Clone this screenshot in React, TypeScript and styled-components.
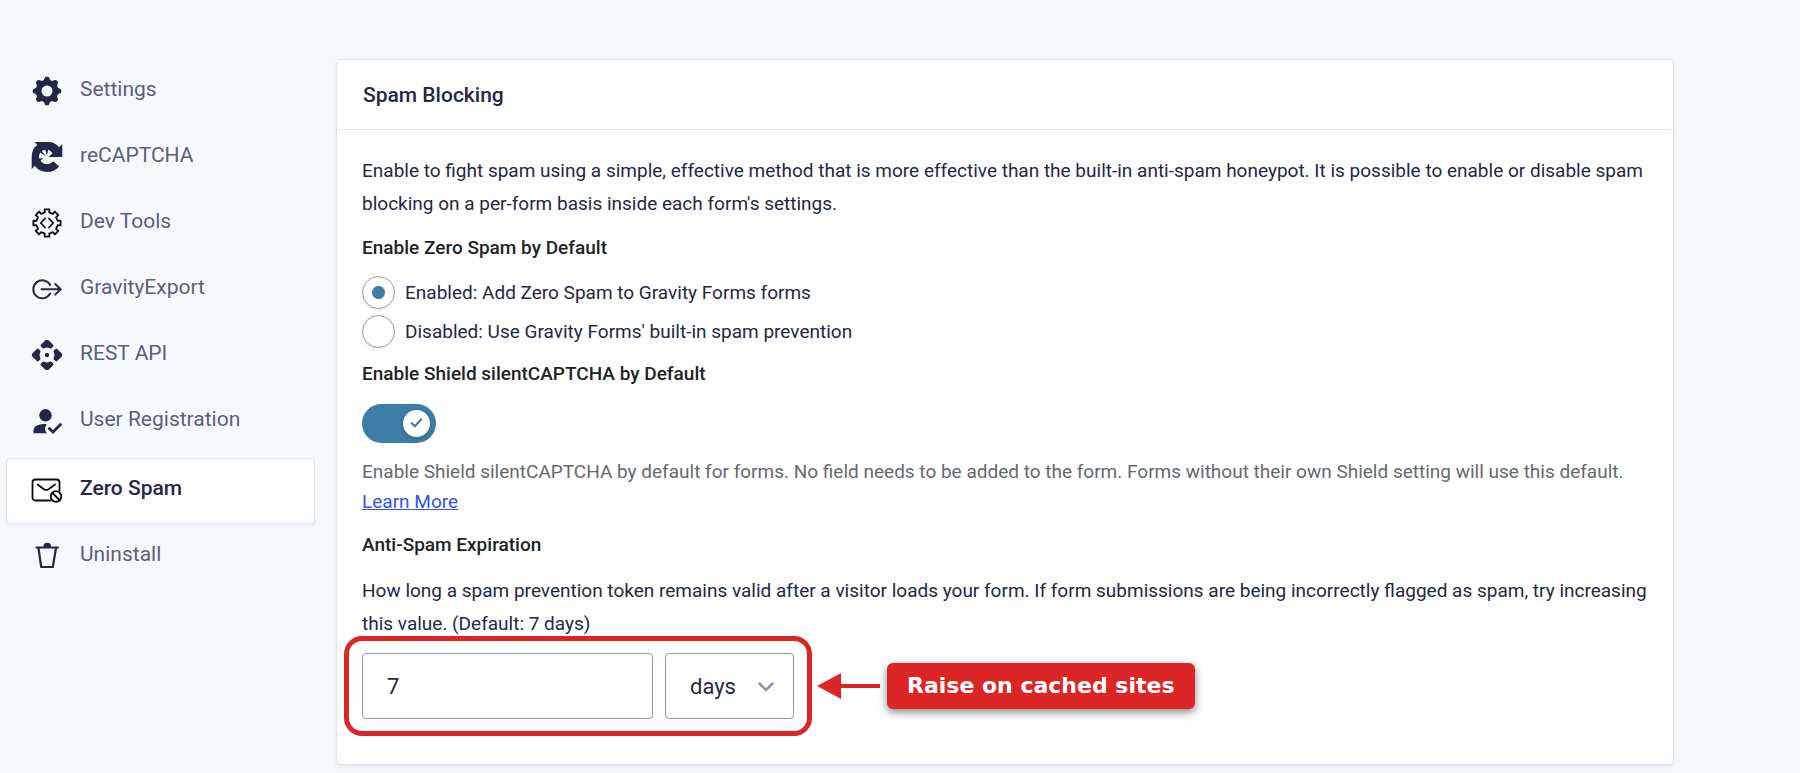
import React, { useState } from "react";
import styled, { createGlobalStyle, css } from "styled-components";

const color = {
  page: "#f5f9fc",
  navy: "#242748",
  slate: "#5b5e80",
  ink: "#1d2327",
  muted: "#646970",
  line: "#dfe2ec",
  field: "#9092b2",
  accent: "#3e7da6",
  link: "#3553e6",
  alert: "#dc2626",
};

const GlobalStyle = createGlobalStyle`
  *, *::before, *::after { box-sizing: border-box; }
  body {
    margin: 0;
    background: ${color.page};
    color: ${color.navy};
    font-family: Roboto, "Liberation Sans", sans-serif;
  }
  h2, h3, p, ul, fieldset { margin: 0; padding: 0; border: 0; }
`;

const Page = styled.div`
  display: flex;
  align-items: flex-start;
  gap: 21px;
  padding: 59px 126px 8px 6px;
`;

const Nav = styled.nav`
  flex: 0 0 309px;
`;

const NavList = styled.ul`
  list-style: none;
`;

const NavLink = styled.a<{ $active?: boolean }>`
  display: flex;
  align-items: center;
  gap: 17px;
  height: 66px;
  padding: 0 24px 2px;
  border: 1px solid transparent;
  border-radius: 4px;
  color: ${color.slate};
  font-size: 21px;
  line-height: 24px;
  text-decoration: none;
  ${(p) =>
    p.$active &&
    css`
      margin-top: 3px;
      background: #fff;
      border-color: ${color.line};
      box-shadow: 0 2px 3px rgba(58, 58, 87, 0.06);
      color: ${color.navy};
      font-weight: 500;
    `}
`;

const NavText = styled.span`
  padding-bottom: 4px;
`;

const NavIcon = styled.svg`
  flex: none;
  width: 32px;
  height: 32px;
  overflow: visible;
`;

const Card = styled.main`
  flex: 1;
  min-width: 0;
  background: #fff;
  border: 1px solid ${color.line};
  border-radius: 4px;
  box-shadow: 0 2px 4px rgba(58, 58, 87, 0.08);
`;

const CardHeader = styled.header`
  padding: 23px 26px 22px;
  border-bottom: 1px solid #e6e7ee;
`;

const CardTitle = styled.h2`
  font-size: 21px;
  line-height: 24px;
  font-weight: 500;
`;

const CardBody = styled.form`
  display: flex;
  flex-direction: column;
  align-items: flex-start;
  padding: 24px 22px 45px 25px;
`;

const Intro = styled.p`
  font-size: 19px;
  line-height: 33px;
`;

const Field = styled.fieldset`
  min-width: 0;
  margin-top: 16px;
`;

const ShieldField = styled(Field)`
  margin-top: 14px;
`;

const FieldTitle = styled.h3`
  color: ${color.ink};
  font-size: 19px;
  line-height: 24px;
  font-weight: 500;
`;

const Choices = styled.div`
  display: grid;
  gap: 6px;
  margin-top: 16px;
`;

const Choice = styled.label`
  display: flex;
  align-items: center;
  gap: 10px;
  font-size: 19px;
  line-height: 33px;
`;

const Radio = styled.input`
  appearance: none;
  flex: none;
  width: 33px;
  height: 33px;
  margin: 0;
  border: 1px solid ${color.field};
  border-radius: 50%;
  box-shadow: 0 2px 2px rgba(58, 58, 87, 0.06);
  &:checked {
    background: radial-gradient(circle, ${color.accent} 6px, #fff 7px);
  }
`;

const Toggle = styled.label`
  display: block;
  position: relative;
  width: 74px;
  height: 39px;
  margin-top: 18px;
`;

const ToggleInput = styled.input`
  appearance: none;
  display: block;
  width: 100%;
  height: 100%;
  margin: 0;
  border-radius: 20px;
  background: ${color.field};
  &:checked {
    background: ${color.accent};
  }
`;

const Knob = styled.svg<{ $on: boolean }>`
  position: absolute;
  top: 6px;
  left: ${(p) => (p.$on ? "41px" : "6px")};
  width: 27px;
  height: 27px;
  border-radius: 50%;
  background: #fff;
  box-shadow: 0 2px 4px rgba(20, 40, 70, 0.25);
  pointer-events: none;
`;

const Help = styled.p`
  margin-top: 14px;
  color: ${color.muted};
  font-size: 19px;
  line-height: 30px;
`;

const HelpLink = styled.a`
  color: ${color.link};
`;

const Explain = styled(Intro)`
  margin-top: 17px;
`;

const Duration = styled.div`
  display: inline-flex;
  position: relative;
  gap: 12px;
  margin-top: 13px;
`;

const control = css`
  height: 66px;
  border: 1px solid ${color.field};
  border-radius: 4px;
  background: #fff;
  color: ${color.navy};
  font-family: inherit;
  font-size: 22px;
`;

const Amount = styled.input`
  ${control}
  width: 291px;
  padding: 0 24px;
`;

const UnitBox = styled.div`
  position: relative;
`;

const Unit = styled.select`
  ${control}
  appearance: none;
  width: 129px;
  padding: 0 48px 0 24px;
`;

const Chevron = styled.svg`
  position: absolute;
  top: 28px;
  right: 20px;
  width: 16px;
  height: 12px;
  pointer-events: none;
`;

const Callout = styled.div`
  position: absolute;
  inset: -17px -18px;
  border: 5px solid ${color.alert};
  border-radius: 18px;
  pointer-events: none;
`;

const CalloutNote = styled.div`
  position: absolute;
  top: 50%;
  left: 100%;
  display: flex;
  align-items: center;
  gap: 6px;
  padding-left: 23px;
  transform: translateY(-50%);
  pointer-events: none;
`;

const Arrow = styled.svg`
  flex: none;
  width: 64px;
  height: 28px;
`;

const NoteLabel = styled.span`
  padding: 8px 20px;
  border-radius: 6px;
  background: ${color.alert};
  box-shadow: 0 3px 9px rgba(0, 0, 0, 0.5);
  color: #fff;
  font-family: "DejaVu Sans", sans-serif;
  font-size: 22px;
  line-height: 30px;
  font-weight: 700;
  white-space: nowrap;
`;

const polar = (r: number, deg: number) => {
  const a = (deg * Math.PI) / 180;
  return `${(16 + r * Math.sin(a)).toFixed(2)} ${(16 - r * Math.cos(a)).toFixed(2)}`;
};

const teeth = [0, 45, 90, 135, 180, 225, 270, 315];

const roundGear =
  teeth
    .map((d, i) => `${i ? "L" : "M"}${polar(13.1, d - 4)} L${polar(13.1, d + 4)} Q${polar(7.5, d + 22.5)} ${polar(13.1, d + 41)}`)
    .join(" ") + "Z";

const squareGear =
  teeth
    .map((d, i) => `${i ? "L" : "M"}${polar(10.8, d - 12)} L${polar(13.8, d - 10)} L${polar(13.8, d + 10)} L${polar(10.8, d + 12)} L${polar(10.8, d + 33)}`)
    .join(" ") + "Z";

const GearIcon = () => (
  <NavIcon viewBox="0 0 32 32" aria-hidden="true">
    <path d={roundGear} fill={color.navy} stroke={color.navy} strokeWidth="2.4" strokeLinejoin="round" />
    <circle cx="16" cy="16" r="5.5" fill={color.page} />
  </NavIcon>
);

const CaptchaIcon = () => (
  <NavIcon viewBox="0 0 32 32" aria-hidden="true">
    <path
      fill={color.navy}
      d="M3.5 1H17.5C22 1 25.500 3 28 6.200L31.300 3.300V16H18.500L16 19 22.200 20.200 28.200 25.500C25.300 29 21 31 16.300 31 11 31 6.500 28.600 3.700 24.800L.700 28.200V16C.700 10.500 2.500 6.500 6.300 3.900Z"
    />
    <path
      fill={color.page}
      d="M15.500 15.800 9.300 11.600Q7.600 14 8 17.200L12.600 17.400Q9.800 18.500 9.600 20C12.500 24 18.700 24.200 22.200 20.200L26 16H17.500L21.500 12.200Q19.800 9.600 17.200 8.800L16 14.500 14.200 8.800Q12 9.200 10.800 10.300Z"
    />
  </NavIcon>
);

const DevToolsIcon = () => (
  <NavIcon viewBox="0 0 32 32" fill="none" stroke="#0c0c0c" strokeLinecap="round" strokeLinejoin="round" aria-hidden="true">
    <path d={squareGear} strokeWidth="1.8" />
    <path d="M14 11.500 9.800 16 14 20.500M18 11.500 22.200 16 18 20.500" strokeWidth="1.800" />
  </NavIcon>
);

const ExportIcon = () => (
  <NavIcon viewBox="0 0 32 32" fill="none" stroke={color.navy} strokeWidth="2" strokeLinecap="round" strokeLinejoin="round" aria-hidden="true">
    <path d="M19.200 12A9 9 0 1 0 19.200 20.600M10.500 16.300H29.500M24.200 11 29.700 16.300 24.200 21.600" />
  </NavIcon>
);

const ApiIcon = () => (
  <NavIcon viewBox="0 0 32 32" fill={color.navy} stroke={color.navy} strokeWidth="2.600" strokeLinejoin="round" aria-hidden="true">
    {[0, 90, 180, 270].map((d) => (
      <path key={d} transform={`rotate(${d} 16 16)`} d="M15.300 2.200H16.700L21.200 6.700 19.700 8.200 17 7.300H15L12.300 8.200 10.800 6.700Z" />
    ))}
    <circle cx="16" cy="16" r="2.200" stroke="none" />
  </NavIcon>
);

const UserIcon = () => (
  <NavIcon viewBox="0 0 32 32" fill={color.navy} aria-hidden="true">
    <circle cx="14.500" cy="10.300" r="6.200" />
    <path d="M14.500 19C17 19 14.200 21.200 14 23.500 13.900 25.500 15 27 16 28.300H2.500V25.500C2.500 21 8 18.800 14.500 19Z" />
    <path d="M18.300 23.500 22 27 29.500 19.500" fill="none" stroke={color.navy} strokeWidth="2.800" strokeLinecap="round" />
  </NavIcon>
);

const MailBlockIcon = () => (
  <NavIcon viewBox="0 0 32 32" fill="none" stroke="#0c0c0c" strokeWidth="1.800" strokeLinecap="round" strokeLinejoin="round" aria-hidden="true">
    <path d="M19.500 26.500H4.500A3 3 0 0 1 1.500 23.500V8.500A3 3 0 0 1 4.500 5.500H25.500A3 3 0 0 1 28.500 8.500V17" />
    <path d="M6.500 10.500 13 15.200Q15.300 16.700 17.500 15.200L24 10.500" />
    <circle cx="25" cy="22.500" r="5.300" />
    <path d="M21.500 19 28.500 26" />
  </NavIcon>
);

const TrashIcon = () => (
  <NavIcon viewBox="0 0 32 32" fill="none" stroke={color.navy} strokeWidth="2.200" strokeLinecap="round" strokeLinejoin="round" aria-hidden="true">
    <path d="M5.500 7.500H27M7.500 8 10.200 27H21.800L25 8" />
    <path d="M13.500 6.500A2.700 2.700 0 0 1 19 6.500Z" fill={color.navy} />
  </NavIcon>
);

const items = [
  { label: "Settings", Icon: GearIcon },
  { label: "reCAPTCHA", Icon: CaptchaIcon },
  { label: "Dev Tools", Icon: DevToolsIcon },
  { label: "GravityExport", Icon: ExportIcon },
  { label: "REST API", Icon: ApiIcon },
  { label: "User Registration", Icon: UserIcon },
  { label: "Zero Spam", Icon: MailBlockIcon, active: true },
  { label: "Uninstall", Icon: TrashIcon },
];

export default function App() {
  const [mode, setMode] = useState("enabled");
  const [shield, setShield] = useState(true);
  const [amount, setAmount] = useState("7");
  const [unit, setUnit] = useState("days");

  return (
    <>
      <GlobalStyle />
      <Page>
        <Nav aria-label="Settings sections">
          <NavList>
            {items.map(({ label, Icon, active }) => (
              <li key={label}>
                <NavLink href="#" $active={active} aria-current={active ? "page" : undefined}>
                  <Icon />
                  <NavText>{label}</NavText>
                </NavLink>
              </li>
            ))}
          </NavList>
        </Nav>
        <Card>
          <CardHeader>
            <CardTitle>Spam Blocking</CardTitle>
          </CardHeader>
          <CardBody>
            <Intro>
              Enable to fight spam using a simple, effective method that is more effective than the built-in anti-spam
              honeypot. It is possible to enable or disable spam blocking on a per-form basis inside each form's
              settings.
            </Intro>
            <Field aria-labelledby="mode-title">
              <FieldTitle id="mode-title">Enable Zero Spam by Default</FieldTitle>
              <Choices>
                <Choice>
                  <Radio type="radio" name="mode" checked={mode === "enabled"} onChange={() => setMode("enabled")} />
                  Enabled: Add Zero Spam to Gravity Forms forms
                </Choice>
                <Choice>
                  <Radio type="radio" name="mode" checked={mode === "disabled"} onChange={() => setMode("disabled")} />
                  Disabled: Use Gravity Forms' built-in spam prevention
                </Choice>
              </Choices>
            </Field>
            <ShieldField aria-labelledby="shield-title">
              <FieldTitle id="shield-title">Enable Shield silentCAPTCHA by Default</FieldTitle>
              <Toggle>
                <ToggleInput
                  type="checkbox"
                  role="switch"
                  aria-labelledby="shield-title"
                  checked={shield}
                  onChange={(e) => setShield(e.target.checked)}
                />
                <Knob $on={shield} viewBox="0 0 27 27" fill="none" stroke={color.accent} strokeWidth="2" aria-hidden="true">
                  {shield && <path d="M8 12.500 11.800 16.300 18.800 8.800" />}
                </Knob>
              </Toggle>
              <Help>
                Enable Shield silentCAPTCHA by default for forms. No field needs to be added to the form. Forms without
                their own Shield setting will use this default. <HelpLink href="#">Learn More</HelpLink>
              </Help>
            </ShieldField>
            <Field aria-labelledby="expiry-title">
              <FieldTitle id="expiry-title">Anti-Spam Expiration</FieldTitle>
              <Explain>
                How long a spam prevention token remains valid after a visitor loads your form. If form submissions are
                being incorrectly flagged as spam, try increasing this value. (Default: 7 days)
              </Explain>
              <Duration>
                <Amount aria-label="Expiration amount" value={amount} onChange={(e) => setAmount(e.target.value)} />
                <UnitBox>
                  <Unit aria-label="Expiration unit" value={unit} onChange={(e) => setUnit(e.target.value)}>
                    <option>days</option>
                    <option>hours</option>
                    <option>weeks</option>
                  </Unit>
                  <Chevron viewBox="0 0 16 12" fill="none" stroke={color.field} strokeWidth="2.500" strokeLinecap="round" aria-hidden="true">
                    <path d="M1.500 2.500 8 9 14.500 2.500" />
                  </Chevron>
                </UnitBox>
                <Callout />
                <CalloutNote>
                  <Arrow viewBox="0 0 64 28" fill={color.alert} aria-hidden="true">
                    <path d="M0 14 24 1V12H63V16H24V27Z" />
                  </Arrow>
                  <NoteLabel>Raise on cached sites</NoteLabel>
                </CalloutNote>
              </Duration>
            </Field>
          </CardBody>
        </Card>
      </Page>
    </>
  );
}
